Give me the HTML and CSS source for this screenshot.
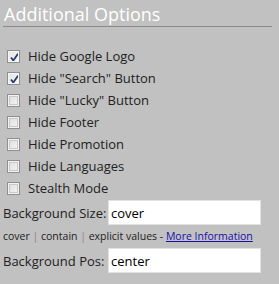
FILE: index.html
```html
<!DOCTYPE html>
<html>
<head>
<meta charset="utf-8">
<link rel="stylesheet" href="styles.css">
</head>
<body>
<div class="panel">
  <h2 class="title">Additional Options</h2>
  <ul class="opts">
    <li><label><input type="checkbox" checked><span>Hide Google Logo</span></label></li>
    <li><label><input type="checkbox" checked><span>Hide "Search" Button</span></label></li>
    <li><label><input type="checkbox"><span>Hide "Lucky" Button</span></label></li>
    <li><label><input type="checkbox"><span>Hide Footer</span></label></li>
    <li><label><input type="checkbox"><span>Hide Promotion</span></label></li>
    <li><label><input type="checkbox"><span>Hide Languages</span></label></li>
    <li><label><input type="checkbox"><span>Stealth Mode</span></label></li>
  </ul>
  <div class="field first">
    <span class="lbl">Background Size:</span>
    <input class="txt" type="text" value="cover">
  </div>
  <div class="help">cover <span class="sep">|</span> contain <span class="sep">|</span> explicit values - <a href="#">More Information</a></div>
  <div class="field">
    <span class="lbl">Background Pos:</span>
    <input class="txt" type="text" value="center">
  </div>
</div>
</body>
</html>
```
FILE: styles.css
```css
html, body {
  margin: 0;
  padding: 0;
  background: #c1c1c1;
}
body {
  font-family: "Open Sans", "DejaVu Sans", sans-serif;
  color: #222;
}
.panel {
  padding: 2px 0 0 3px;
  width: 269px;
}
.title {
  margin: 0;
  padding: 0 0 0 1px;
  font-size: 18px;
  font-weight: normal;
  color: #fff;
  line-height: 24px;
  border-bottom: 1px solid #8a8a8a;
}
.opts {
  list-style: none;
  margin: 0;
  padding: 18px 0 0 0;
}
.opts li {
  height: 22px;
}
.opts label {
  display: flex;
  align-items: center;
  height: 22px;
  font-size: 13px;
}
.opts input {
  appearance: none;
  -webkit-appearance: none;
  margin: 0 8px 0 4px;
  width: 13px;
  height: 13px;
  box-sizing: border-box;
  border: 1px solid #8f8f8f;
  background: linear-gradient(135deg, #dcdcdc, #f6f6f6);
  box-shadow: inset 0 0 0 1px #f2f2f2, inset 0 0 0 2px #c9c9c9;
  position: relative;
}
.opts input:checked {
  background-color: #f4f4f4;
  background-image: url("data:image/svg+xml;utf8,<svg xmlns='http://www.w3.org/2000/svg' width='13' height='13' viewBox='0 0 13 13'><path d='M3 6.5 L5.3 9.5 L10 2.8' fill='none' stroke='%232a3a6a' stroke-width='1.8'/></svg>"), linear-gradient(135deg, #e4e4e4, #f8f8f8);
  box-shadow: inset 0 0 0 1px #f5f5f5;
}
.field {
  display: flex;
  align-items: center;
  font-size: 13px;
}
.first {
  margin-top: 1px;
}
.lbl {
  width: 105px;
}
.txt {
  width: 153px;
  height: 25px;
  box-sizing: border-box;
  border: 1px solid #e2e2e2;
  background: #fff;
  font-family: "Open Sans", sans-serif;
  font-size: 13px;
  padding: 0 2px;
  margin: 0;
  color: #000;
}
.help {
  font-size: 10.5px;
  height: 23px;
  line-height: 23px;
  color: #222;
}
.help .sep {
  color: #888;
}
.help a {
  color: #1a0dab;
}
```
